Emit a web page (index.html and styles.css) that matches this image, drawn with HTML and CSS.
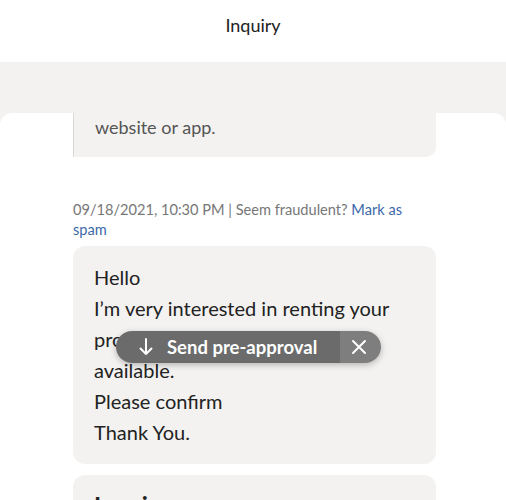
FILE: index.html
```html
<!DOCTYPE html>
<html>
<head>
<meta charset="utf-8">
<link rel="stylesheet" href="styles.css">
</head>
<body>
<div class="app">
  <header class="topbar">Inquiry</header>
  <div class="band"></div>
  <main class="sheet">
    <div class="prev-bubble">website or app.</div>
    <div class="meta">09/18/2021, 10:30 PM | Seem fraudulent? <a class="link">Mark as spam</a></div>
    <div class="bubble msg">Hello
I’m very interested in renting your
property if it’s still
available.
Please confirm
Thank You.</div>
    <div class="bubble next">
      <div class="next-title">Inquiry</div>
    </div>
  </main>
  <div class="toast">
    <div class="toast-main">
      <svg class="toast-arrow" width="14" height="18" viewBox="0 0 14 18"><path d="M7 1v15M1.5 10.5L7 16l5.5-5.5" fill="none" stroke="#fff" stroke-width="2" stroke-linecap="round" stroke-linejoin="round"/></svg>
      <span class="toast-label">Send pre-approval</span>
    </div>
    <div class="toast-close">
      <svg width="16" height="16" viewBox="0 0 16 16"><path d="M2 2l12 12M14 2L2 14" stroke="#fff" stroke-width="2" stroke-linecap="round"/></svg>
    </div>
  </div>
</div>
</body>
</html>
```

FILE: styles.css
```css
html, body {
  margin: 0;
  padding: 0;
  background: #fff;
}
.app {
  position: relative;
  width: 506px;
  height: 500px;
  overflow: hidden;
  font-family: "Lato", "Noto Sans", sans-serif;
  background: #f3f2f0;
}
.topbar {
  height: 62px;
  background: #fff;
  display: flex;
  align-items: center;
  justify-content: center;
  font-size: 18px;
  color: #222;
  padding-bottom: 12px;
  box-sizing: border-box;
}
.band {
  height: 51px;
}
.sheet {
  background: #fff;
  border-radius: 12px 12px 0 0;
  padding: 0 70px 0 73px;
  height: 400px;
}
.prev-bubble {
  background: #f3f2f0;
  border-left: 1px solid #d9d8d6;
  border-radius: 0 0 10px 0;
  height: 44px;
  box-sizing: border-box;
  padding: 3px 0 0 21px;
  font-size: 18px;
  color: #555;
}
.meta {
  margin-top: 43px;
  max-width: 335px;
  font-size: 14.6px;
  line-height: 20px;
  color: #777;
}
.link {
  color: #3b68a8;
}
.bubble {
  background: #f3f2f0;
  border-radius: 12px;
}
.msg {
  margin-top: 6px;
  padding: 16px 21px 16px 21px;
  font-size: 20px;
  line-height: 31px;
  color: #222;
  white-space: pre-line;
}
.next {
  margin-top: 11px;
  height: 60px;
  padding: 16px 21px;
}
.next-title {
  font-size: 24px;
  font-weight: 700;
  color: #222;
}
.toast {
  position: absolute;
  left: 116px;
  top: 331px;
  width: 265px;
  height: 32px;
  border-radius: 16px;
  overflow: hidden;
  display: flex;
  box-shadow: 0 2px 6px rgba(0,0,0,0.25);
}
.toast-main {
  flex: 1;
  background: #6b6b6b;
  display: flex;
  align-items: center;
  padding-left: 23px;
  gap: 14px;
  color: #fff;
}
.toast-label {
  font-size: 18.5px;
  font-weight: 700;
}
.toast-close {
  width: 41px;
  background: #7e7e7e;
  display: flex;
  align-items: center;
  justify-content: center;
  padding-right: 4px;
  box-sizing: border-box;
}
```
